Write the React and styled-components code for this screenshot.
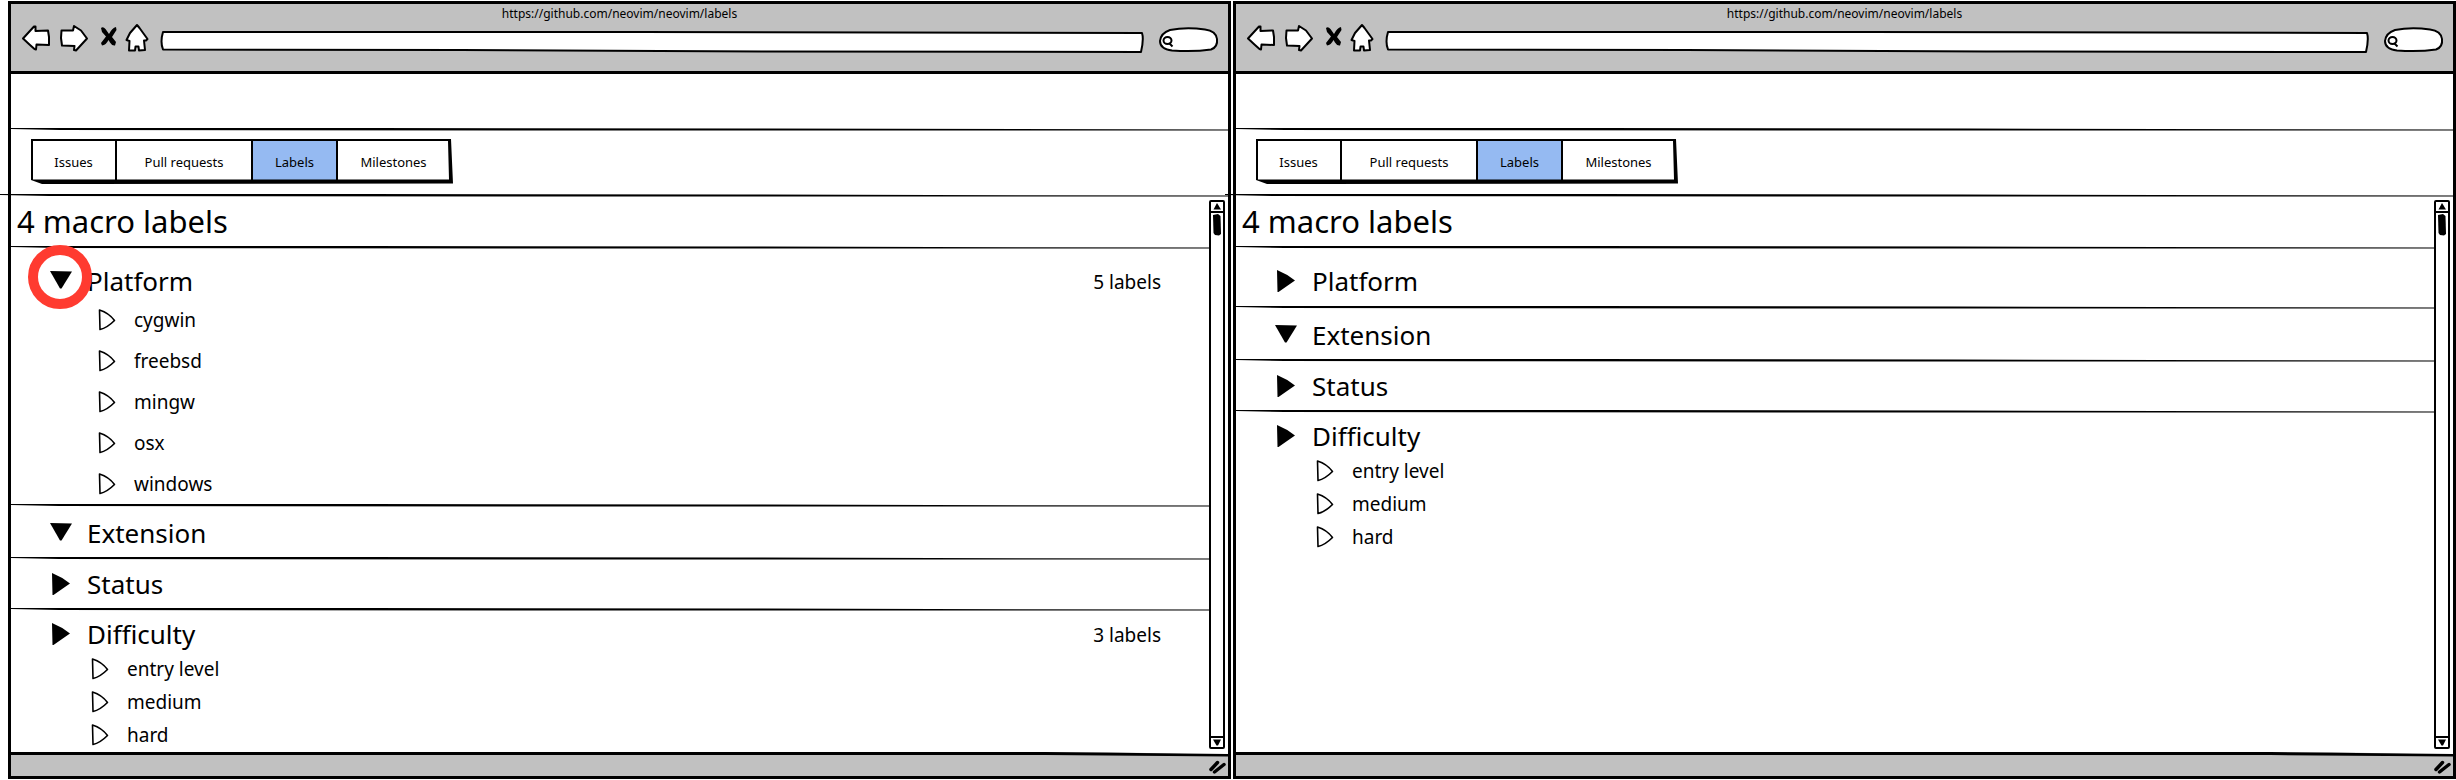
import React, { useState } from "react";
import styled, { createGlobalStyle } from "styled-components";

const GlobalStyle = createGlobalStyle`
  *, *::before, *::after { box-sizing: border-box; }
  body {
    margin: 0;
    background: #fff;
    color: #000;
    font-family: "Noto Sans", "Open Sans", sans-serif;
  }
  button, input {
    font: inherit;
    color: inherit;
  }
  button {
    padding: 0;
    border: 0;
    background: none;
    cursor: pointer;
  }
`;

const Board = styled.main`
  display: grid;
  grid-template-columns: 1fr 1fr;
  gap: 2px;
  min-height: 100vh;
  padding: 1px 0 1px 8px;
`;

const BrowserWindow = styled.section`
  display: flex;
  flex-direction: column;
  min-width: 0;
  border: 3px solid #000;
  background: #fff;
`;

const Chrome = styled.header`
  height: 70px;
  border-bottom: 3px solid #000;
  background: #c1c1c1;
`;

const WindowTitle = styled.div`
  height: 18px;
  font-size: 12px;
  line-height: 20px;
  text-align: center;
`;

const NavBar = styled.form`
  display: flex;
  align-items: flex-end;
  height: 31px;
  padding: 0 9px 0 10px;
`;

const NavButton = styled.button`
  display: flex;
  width: ${(p) => p.$width}px;
  height: 30px;
  margin-right: ${(p) => p.$gap}px;
`;

const Field = styled.label`
  position: relative;
  display: flex;
  align-items: center;
  flex: ${(p) => (p.$grow ? "1" : "0 0 61px")};
  height: ${(p) => (p.$grow ? 23 : 26)}px;
  margin-left: ${(p) => (p.$grow ? 0 : 14)}px;
`;

const FieldOutline = styled.svg`
  position: absolute;
  inset: 0;
  width: 100%;
  height: 100%;
  overflow: visible;
`;

const FieldInput = styled.input`
  position: relative;
  width: 100%;
  min-width: 0;
  height: 16px;
  padding: 0 6px 0 ${(p) => (p.$search ? 18 : 6)}px;
  border: 0;
  outline: 0;
  background: transparent;
  font-size: 12px;
`;

const Banner = styled.div`
  height: 54px;
`;

const Rule = styled.svg`
  display: block;
  flex: none;
  width: calc(100% + ${(p) => p.$before || 0}px + ${(p) => p.$after || 0}px);
  height: 2px;
  margin-left: -${(p) => p.$before || 0}px;
  overflow: visible;
`;

const TabBar = styled.nav`
  display: flex;
  height: 64px;
  padding: 10px 20px;
`;

const TabGroup = styled.div`
  position: relative;
  display: flex;
  height: 42px;
`;

const TabOutline = styled.svg`
  position: absolute;
  left: 0;
  top: -1px;
  overflow: visible;
  pointer-events: none;
`;

const Tab = styled.button`
  width: ${(p) => p.$width}px;
  padding-top: 2px;
  background: ${(p) => (p.$active ? "#95baf2" : "#fff")};
  font-size: 13px;
  line-height: 18px;
`;

const Viewport = styled.div`
  display: flex;
  flex: 1;
`;

const Content = styled.div`
  flex: 1;
  min-width: 0;
`;

const Heading = styled.h1`
  height: 50px;
  margin: 0;
  padding-left: 6px;
  font-size: 31px;
  font-weight: 400;
  line-height: 51px;
`;

const Group = styled.section`
  padding: ${(p) => p.$top}px 0 ${(p) => p.$bottom}px;
`;

const GroupHeader = styled.div`
  position: relative;
  display: flex;
  align-items: center;
  justify-content: space-between;
  height: 36px;
  padding: 0 48px 0 39px;
`;

const GroupToggle = styled.button`
  display: flex;
  align-items: center;
  gap: 15px;
  height: 36px;
  font-size: 26px;
  line-height: 36px;
`;

const Count = styled.span`
  padding-top: 2px;
  font-size: 19px;
  line-height: 36px;
`;

const Ring = styled.span`
  position: absolute;
  left: 17px;
  top: -18px;
  width: 64px;
  height: 64px;
  border: 10px solid #ff3b30;
  border-radius: 50%;
  pointer-events: none;
`;

const Items = styled.ul`
  margin: 0;
  padding: 0 0 0 ${(p) => (p.$compact ? 80 : 87)}px;
  list-style: none;
`;

const Item = styled.li`
  display: flex;
  height: ${(p) => (p.$compact ? 33 : 41)}px;
`;

const ItemToggle = styled.button`
  display: flex;
  align-items: center;
  gap: 18px;
  font-size: 19px;
  line-height: 26px;
`;

const Scrollbar = styled.div`
  display: flex;
  flex-direction: column;
  width: 16px;
  margin: 4px 3px 3px 0;
  border: 2px solid #000;
  border-radius: 2px;
`;

const ScrollButton = styled.button`
  display: flex;
  height: 9px;
`;

const ScrollTrack = styled.div`
  flex: 1;
  border-top: 2px solid #000;
  border-bottom: 2px solid #000;
`;

const ThumbDrawing = styled.svg`
  display: block;
  margin: 0 auto;
`;

const StatusBar = styled.footer`
  display: flex;
  flex-direction: column;
  background: #c1c1c1;
`;

const StatusEdge = styled.svg`
  display: block;
  width: 100%;
  height: 5px;
`;

const GripRow = styled.div`
  display: flex;
  justify-content: flex-end;
  height: 19px;
  padding: 3px 2px 0 0;
`;

const BackIcon = () => (
  <svg width="30" height="30" viewBox="0 0 30 30" aria-hidden="true">
    <path d="M2 15.500 L13 3.500 L14.500 3.500 L14.500 8 L27 7.500 L28 14 L28 22 L15.500 21.500 L15 26.500 L13.500 26 L9 22 Z" fill="#fff" stroke="#000" strokeWidth="2" strokeLinejoin="round" />
  </svg>
);

const ForwardIcon = () => (
  <svg width="30" height="30" viewBox="0 0 30 30" aria-hidden="true">
    <path d="M2.500 7.500 L14 7.500 L15 3 L22 7.500 L28 15.500 L17 27.500 L15 27 L15.500 23 L3 22.500 L2 15 Z" fill="#fff" stroke="#000" strokeWidth="2" strokeLinejoin="round" />
  </svg>
);

const StopIcon = () => (
  <svg width="18" height="30" viewBox="0 0 18 30" aria-hidden="true">
    <path d="M1 5 Q3 3 5.500 6 L9 11 Q12 5 16 4 L16.500 7 L12 14 L16 19 L15 22.500 Q12 23 10 19.500 L8.500 17 Q6 22 2 22.500 L1 20 L6 13.500 L2 9 Z" fill="#000" />
  </svg>
);

const HomeIcon = () => (
  <svg width="24" height="30" viewBox="0 0 24 30" aria-hidden="true">
    <path d="M12 2 L14.500 5 L22.500 16 L21 17.500 L19 17.500 L20 27 L14 27.500 L13.500 23.500 L10.500 23.500 L10 27.500 L4 27.500 L4.500 18 L1.500 17 L5 10 Z" fill="#fff" stroke="#000" strokeWidth="2" strokeLinejoin="round" />
  </svg>
);

const SolidArrow = ({ open }) => (
  <svg width="22" height="22" viewBox="0 0 22 22" aria-hidden="true">
    {open ? <path d="M0 1 L22 1.500 L11.500 18.500 L10 18.500 Z" /> : <path d="M2 0 Q12 4 20 10.500 Q12 16 3.500 22 L2.500 22 Z" />}
  </svg>
);

const OutlineArrow = () => (
  <svg width="18" height="22" viewBox="0 0 18 22" aria-hidden="true">
    <path d="M1.500 1 Q11 4 16.500 11.500 Q9 19 2 20.500 Z" fill="#fff" stroke="#000" strokeWidth="1.600" strokeLinejoin="round" />
  </svg>
);

function SketchRule({ before, after }) {
  return (
    <Rule $before={before} $after={after} viewBox="0 0 1000 2" preserveAspectRatio="none" aria-hidden="true">
      <path d="M0 0 L300 0 L600 0.500 L1000 1.600 L1000 2.600 L600 2.600 L200 2.200 L40 2 L0 1 Z" />
    </Rule>
  );
}

const tabs = [
  { name: "Issues", width: 85 },
  { name: "Pull requests", width: 136 },
  { name: "Labels", width: 85 },
  { name: "Milestones", width: 113 },
];

function Tabs() {
  return (
    <TabBar aria-label="Repository">
      <TabGroup>
        {tabs.map((t) => (
          <Tab key={t.name} type="button" $width={t.width} $active={t.name === "Labels"}>
            {t.name}
          </Tab>
        ))}
        <TabOutline width="422" height="46" viewBox="0 0 422 46" aria-hidden="true">
          <path fillRule="evenodd" d="M0 0 L420 0 L422 44.500 L60 45 L11 45 L0 41 Z M2 2 L2 40.500 L418 40.500 L417 2 Z" />
          <path d="M85 1 V42 M221 1 V42 M306 1 V42" stroke="#000" strokeWidth="2" />
        </TabOutline>
      </TabGroup>
    </TabBar>
  );
}

function Toolbar() {
  return (
    <NavBar onSubmit={(e) => e.preventDefault()}>
      <NavButton type="button" aria-label="Back" $width={30} $gap={8}><BackIcon /></NavButton>
      <NavButton type="button" aria-label="Forward" $width={30} $gap={11}><ForwardIcon /></NavButton>
      <NavButton type="button" aria-label="Stop" $width={18} $gap={7}><StopIcon /></NavButton>
      <NavButton type="button" aria-label="Home" $width={24} $gap={11}><HomeIcon /></NavButton>
      <Field $grow>
        <FieldOutline viewBox="0 0 982 23" preserveAspectRatio="none" aria-hidden="true">
          <path d="M3 2 L480 2 L980 3 Q982 9 979 22 L600 21.500 L300 20 L3 19.500 Q0 12 3 2 Z" fill="#fff" stroke="#000" strokeWidth="2" strokeLinejoin="round" />
        </FieldOutline>
        <FieldInput type="text" aria-label="Address" />
      </Field>
      <Field>
        <FieldOutline viewBox="0 0 61 26" aria-hidden="true">
          <path d="M12 3 Q28 0 47 2.500 Q58 4 59 12 Q60 20 53 22.500 Q36 25 14 23.500 Q2 22 2 14 Q3 6 12 3 Z" fill="#fff" stroke="#000" strokeWidth="2" />
          <ellipse cx="9.500" cy="13.500" rx="4" ry="3.500" fill="none" stroke="#000" strokeWidth="2" />
          <path d="M11 16 L14.500 19.500" stroke="#000" strokeWidth="2" />
        </FieldOutline>
        <FieldInput type="search" aria-label="Search" $search />
      </Field>
    </NavBar>
  );
}

function LabelGroup({ name, open, count, items, compact, marked, top, bottom }) {
  const [expanded, setExpanded] = useState(open);
  return (
    <Group $top={top} $bottom={bottom}>
      <GroupHeader>
        <GroupToggle type="button" aria-expanded={expanded} onClick={() => setExpanded(!expanded)}>
          <SolidArrow open={expanded} />
          {name}
        </GroupToggle>
        {count && <Count>{count}</Count>}
        {marked && <Ring />}
      </GroupHeader>
      {items && (
        <Items $compact={compact}>
          {items.map((item) => (
            <Item key={item} $compact={compact}>
              <ItemToggle type="button">
                <OutlineArrow />
                {item}
              </ItemToggle>
            </Item>
          ))}
        </Items>
      )}
    </Group>
  );
}

function ScrollRail() {
  return (
    <Scrollbar>
      <ScrollButton type="button" aria-label="Scroll up">
        <svg width="12" height="9" viewBox="0 0 12 9"><path d="M6 1 L10 7.500 L2.500 7.500 Z" /></svg>
      </ScrollButton>
      <ScrollTrack>
        <ThumbDrawing width="10" height="24" viewBox="0 0 10 24" aria-hidden="true">
          <path d="M1 2 L6 1 L8.500 3 L9 21 L7 22.500 L3 22 L1.500 20 Z" />
        </ThumbDrawing>
      </ScrollTrack>
      <ScrollButton type="button" aria-label="Scroll down">
        <svg width="12" height="9" viewBox="0 0 12 9"><path d="M2 1.500 L10 1.500 L7 7.500 L5.500 7.500 Z" /></svg>
      </ScrollButton>
    </Scrollbar>
  );
}

function Browser({ groups }) {
  return (
    <BrowserWindow>
      <Chrome>
        <WindowTitle>https://github.com/neovim/neovim/labels</WindowTitle>
        <Toolbar />
      </Chrome>
      <Banner />
      <SketchRule after={3} />
      <Tabs />
      <SketchRule before={11} />
      <Viewport>
        <Content>
          <Heading>4 macro labels</Heading>
          {groups.map((g) => (
            <React.Fragment key={g.name}>
              <SketchRule />
              <LabelGroup {...g} />
            </React.Fragment>
          ))}
        </Content>
        <ScrollRail />
      </Viewport>
      <StatusBar>
        <StatusEdge viewBox="0 0 1000 5" preserveAspectRatio="none" aria-hidden="true">
          <path d="M0 0 H1000 V3 L900 0 Z" fill="#fff" />
          <path d="M0 0 L850 0 L1000 2 L1000 4.500 L850 3 L0 3 Z" />
        </StatusEdge>
        <GripRow>
          <svg width="17" height="15" viewBox="0 0 17 15" aria-hidden="true">
            <path d="M2 9.500 L8.500 2.500 M5.500 12 L15 4.500" stroke="#000" strokeWidth="3.500" strokeLinecap="round" />
          </svg>
        </GripRow>
      </StatusBar>
    </BrowserWindow>
  );
}

const platforms = ["cygwin", "freebsd", "mingw", "osx", "windows"];
const difficulties = ["entry level", "medium", "hard"];

const extension = { name: "Extension", open: true, top: 9, bottom: 6 };
const status = { name: "Status", open: false, top: 7, bottom: 6 };
const difficulty = { name: "Difficulty", open: false, items: difficulties, compact: true, top: 6, bottom: 0 };

const expandedGroups = [
  { name: "Platform", open: true, count: "5 labels", items: platforms, marked: true, top: 15, bottom: 0 },
  extension,
  status,
  { ...difficulty, count: "3 labels" },
];

const collapsedGroups = [
  { name: "Platform", open: false, top: 15, bottom: 7 },
  extension,
  status,
  difficulty,
];

export default function App() {
  return (
    <>
      <GlobalStyle />
      <Board>
        <Browser groups={expandedGroups} />
        <Browser groups={collapsedGroups} />
      </Board>
    </>
  );
}
